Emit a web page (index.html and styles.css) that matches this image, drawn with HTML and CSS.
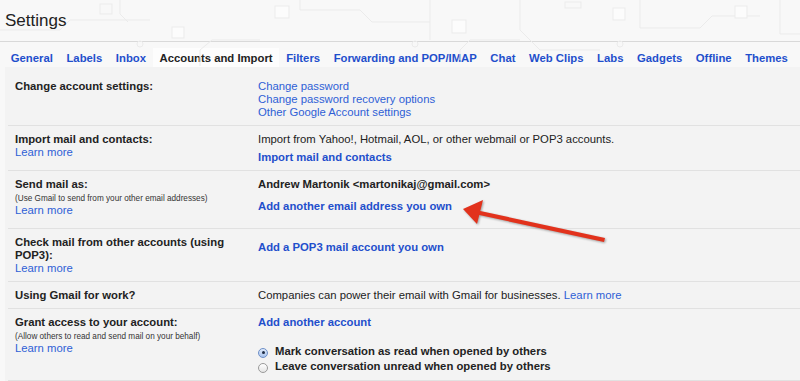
FILE: index.html
```html
<!DOCTYPE html>
<html lang="en">
<head>
    <meta charset="UTF-8">
    <meta name="viewport" content="width=device-width, initial-scale=1.0">
    <title>Settings - Accounts and Import</title>
    <link rel="stylesheet" href="styles.css">
</head>
<body>
    <header class="top">
        <svg class="circuit" width="800" height="67" viewBox="0 0 800 67" aria-hidden="true">
            <g fill="none" stroke="#ebebeb" stroke-width="1">
                <path d="M0 30 H60 L70 20 H150 M120 0 V14 L128 22 M300 0 V10 H360 L372 22 H430 M430 0 V40 M460 60 V50 L470 40 H520 M520 0 V30 L540 50 H600 M640 0 V28 H700 L712 16 H760 M780 0 V34 H800 M200 66 V50 L212 40 H260"/>
                <rect x="100" y="4" width="12" height="10"/>
                <rect x="172" y="27" width="12" height="11" fill="#fcfcfc"/>
                <rect x="275" y="6" width="14" height="12" fill="#fcfcfc"/>
                <rect x="452" y="20" width="14" height="13" fill="#fcfcfc"/>
                <rect x="565" y="2" width="16" height="6"/>
                <rect x="613" y="8" width="12" height="12" fill="#fcfcfc"/>
                <rect x="735" y="6" width="12" height="12" fill="#fcfcfc"/>
                <circle cx="140" cy="44" r="3"/>
                <circle cx="415" cy="44" r="3"/>
                <circle cx="620" cy="44" r="3"/>
            </g>
        </svg>
        <h1>Settings</h1>
    </header>

    <nav class="tabs">
        <a href="#">General</a>
        <a href="#">Labels</a>
        <a href="#">Inbox</a>
        <a href="#" class="active">Accounts and Import</a>
        <a href="#">Filters</a>
        <a href="#">Forwarding and POP/IMAP</a>
        <a href="#">Chat</a>
        <a href="#">Web Clips</a>
        <a href="#">Labs</a>
        <a href="#">Gadgets</a>
        <a href="#">Offline</a>
        <a href="#">Themes</a>
    </nav>

    <main class="panel">
        <div class="row first">
            <div class="label">
                <b>Change account settings:</b>
            </div>
            <div class="value">
                <a href="#" class="link">Change password</a><br>
                <a href="#" class="link">Change password recovery options</a><br>
                <a href="#" class="link">Other Google Account settings</a>
            </div>
        </div>

        <div class="row">
            <div class="label">
                <b>Import mail and contacts:</b><br>
                <a href="#" class="link">Learn more</a>
            </div>
            <div class="value">
                Import from Yahoo!, Hotmail, AOL, or other webmail or POP3 accounts.
                <a href="#" class="action spaced">Import mail and contacts</a>
            </div>
        </div>

        <div class="row tall">
            <div class="label">
                <b>Send mail as:</b>
                <span class="note">(Use Gmail to send from your other email addresses)</span>
                <a href="#" class="link">Learn more</a>
            </div>
            <div class="value">
                <b>Andrew Martonik &lt;martonikaj@gmail.com&gt;</b>
                <a href="#" class="action wide">Add another email address you own</a>
            </div>
        </div>

        <div class="row">
            <div class="label">
                <b>Check mail from other accounts (using POP3):</b><br>
                <a href="#" class="link">Learn more</a>
            </div>
            <div class="value pushed">
                <a href="#" class="action">Add a POP3 mail account you own</a>
            </div>
        </div>

        <div class="row">
            <div class="label">
                <b>Using Gmail for work?</b>
            </div>
            <div class="value">
                Companies can power their email with Gmail for businesses. <a href="#" class="link">Learn more</a>
            </div>
        </div>

        <div class="row">
            <div class="label">
                <b>Grant access to your account:</b>
                <span class="note">(Allow others to read and send mail on your behalf)</span>
                <a href="#" class="link">Learn more</a>
            </div>
            <div class="value">
                <a href="#" class="action">Add another account</a>
                <div class="radios">
                    <label class="radio"><span class="dot checked"></span>Mark conversation as read when opened by others</label>
                    <label class="radio"><span class="dot"></span>Leave conversation unread when opened by others</label>
                </div>
            </div>
        </div>
    </main>

    <!-- annotation arrow drawn over the screenshot -->
    <svg class="arrow" width="800" height="381" viewBox="0 0 800 381" aria-hidden="true">
        <g fill="#e2321c" stroke="none">
            <polygon points="478,210.5 605,238 604,242 477,214.5"/>
            <polygon points="463,209 483,200 477,224"/>
        </g>
    </svg>
</body>
</html>
```

FILE: styles.css
```css
body {
    margin: 0;
    padding: 0;
    background-color: #f8f8f8;
    color: #222;
    font-family: "Liberation Sans", Arial, Helvetica, sans-serif;
    font-size: 11.3px;
    line-height: 13px;
    overflow: hidden;
}

a {
    text-decoration: none;
}

/* Header */
.top {
    position: relative;
    height: 41px;
    border-bottom: 1px solid #d9d9d9;
}

.circuit {
    position: absolute;
    left: 0;
    top: 0;
}

.top h1 {
    position: relative;
    margin: 0;
    padding: 12px 0 0 5px;
    font-size: 17px;
    font-weight: normal;
    line-height: 18px;
    color: #222;
}

/* Tabs */
.tabs {
    display: flex;
    align-items: flex-end;
    height: 25px;
    padding-left: 4px;
}

.tabs a {
    padding: 0 6.8px;
    height: 19px;
    line-height: 20px;
    font-weight: bold;
    color: #1f4fcc;
    white-space: nowrap;
}

.tabs a.active {
    color: #222;
    background: #fdfdfd;
}

/* Settings panel */
.panel {
    margin-left: 5px;
    background: #f3f3f3;
    min-height: 320px;
}

.row {
    display: grid;
    grid-template-columns: 243px 1fr;
    margin-left: 3px;
    padding: 7px 0 6px 7px;
    border-bottom: 1px solid #e1e1e1;
}

.row.first {
    padding-top: 13px;
}

.row.tall {
    padding-bottom: 11px;
}

.label b {
    color: #222;
}

.label .link {
    display: inline-block;
}

.note {
    display: block;
    font-size: 8.2px;
    line-height: 13px;
    margin-top: 1px;
    margin-bottom: -1px;
    color: #333;
}

.value {
    color: #222;
}

.value.pushed {
    padding-top: 5px;
}

.link {
    color: #2f5fd6;
}

.action {
    display: block;
    font-weight: bold;
    color: #1f4fcc;
}

.action.spaced {
    margin-top: 5px;
}

.action.wide {
    margin-top: 9px;
}

/* Radio options */
.radios {
    margin-top: 15px;
}

.radio {
    display: flex;
    align-items: center;
    height: 15px;
    font-weight: bold;
    color: #222;
}

.dot {
    width: 10px;
    height: 10px;
    margin-right: 7px;
    border: 1px solid #9a9a9a;
    border-radius: 50%;
    background: linear-gradient(#ffffff, #e4e4e4);
    box-sizing: border-box;
    position: relative;
    top: 1px;
}

.dot.checked {
    border-color: #6d8fc8;
    background: linear-gradient(#dfeafa, #a9c4ee);
}

.dot.checked::after {
    content: "";
    position: absolute;
    left: 2.5px;
    top: 2.5px;
    width: 3px;
    height: 3px;
    border-radius: 50%;
    background: #1d2b44;
}

/* Annotation */
.arrow {
    position: absolute;
    left: 0;
    top: 0;
    pointer-events: none;
    filter: drop-shadow(1px 1px 1px rgba(0, 0, 0, 0.35));
}
```
